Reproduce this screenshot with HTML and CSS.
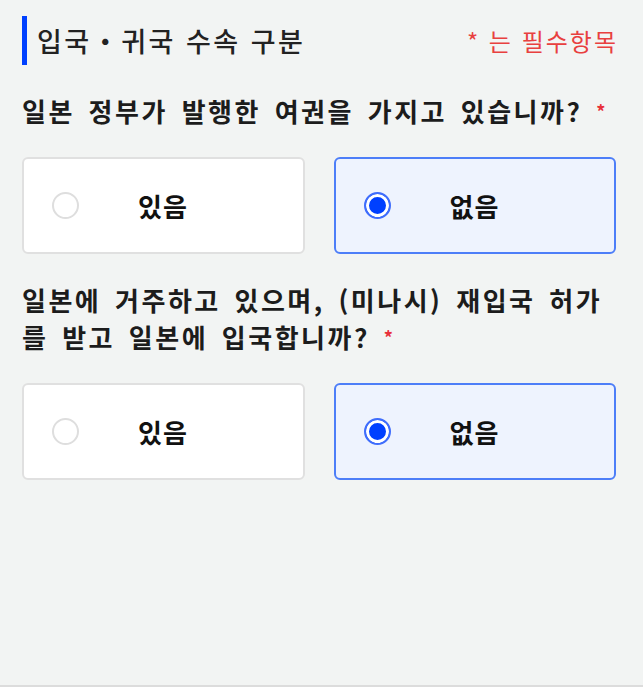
FILE: index.html
```html
<!DOCTYPE html>
<html lang="ko">
<head>
    <meta charset="UTF-8">
    <meta name="viewport" content="width=device-width, initial-scale=1.0">
    <title>입국・귀국 수속 구분</title>
    <link rel="stylesheet" href="styles.css">
</head>
<body>

    <div class="page">
        <div class="section-head">
            <h2>입국・귀국 수속 구분</h2>
            <span class="required-note">* 는 필수항목</span>
        </div>

        <!-- 여권 여부 -->
        <p class="question">일본 정부가 발행한 여권을 가지고 있습니까? <span class="req">*</span></p>
        <div class="options">
            <label class="option">
                <input type="radio" name="passport" value="yes">
                <span class="radio"></span>
                <span class="option-text">있음</span>
            </label>
            <label class="option checked">
                <input type="radio" name="passport" value="no" checked>
                <span class="radio"></span>
                <span class="option-text">없음</span>
            </label>
        </div>

        <!-- 재입국 허가 여부 -->
        <p class="question">일본에 거주하고 있으며, (미나시) 재입국 허가를 받고 일본에 입국합니까? <span class="req">*</span></p>
        <div class="options">
            <label class="option">
                <input type="radio" name="reentry" value="yes">
                <span class="radio"></span>
                <span class="option-text">있음</span>
            </label>
            <label class="option checked">
                <input type="radio" name="reentry" value="no" checked>
                <span class="radio"></span>
                <span class="option-text">없음</span>
            </label>
        </div>
    </div>

    <script>
        // keep the card highlight in sync with the radio state
        var radios = document.querySelectorAll('.option input');
        for (var i = 0; i < radios.length; i++) {
            radios[i].addEventListener('change', function () {
                var group = document.querySelectorAll('input[name="' + this.name + '"]');
                for (var j = 0; j < group.length; j++) {
                    group[j].parentNode.classList.toggle('checked', group[j].checked);
                }
            });
        }
    </script>

</body>
</html>
```

FILE: styles.css
```css
* {
    box-sizing: border-box;
}

body {
    font-family: "Noto Sans CJK KR", "Noto Sans", sans-serif;
    background-color: #f2f4f3;
    color: #1a1a1a;
    margin: 0;
    padding: 0;
}

.page {
    height: 687px;
    padding: 16px 27px 0 22px;
    border-bottom: 2px solid #dcdcdc;
}

.section-head {
    display: flex;
    align-items: center;
    justify-content: space-between;
    height: 49px;
    border-left: 5px solid #0040ff;
    padding-left: 10px;
}

.section-head h2 {
    margin: 0;
    font-size: 27px;
    font-weight: 500;
    letter-spacing: 2.5px;
    color: #222;
}

.required-note {
    color: #e8403f;
    font-size: 24px;
    letter-spacing: 2px;
    margin-right: -2px;
}

.question {
    margin: 27px 0 0;
    font-size: 26px;
    font-weight: 700;
    line-height: 37px;
    letter-spacing: 2.5px;
    word-spacing: 4px;
    color: #1c1c1c;
}

.req {
    color: #e8303a;
    font-size: 18px;
    letter-spacing: 0;
    vertical-align: 3px;
}

.options {
    display: flex;
    gap: 29px;
    margin-top: 27px;
}

.option {
    flex: 1;
    height: 97px;
    display: flex;
    align-items: center;
    padding-left: 28px;
    background-color: white;
    border: 2px solid #e0e0e0;
    border-radius: 6px;
    cursor: pointer;
}

.option input {
    display: none;
}

.radio {
    width: 27px;
    height: 27px;
    border: 2px solid #dedede;
    border-radius: 50%;
    background-color: white;
    flex-shrink: 0;
}

.option-text {
    margin-left: 59px;
    font-size: 26px;
    font-weight: 700;
    letter-spacing: 1px;
    color: #111;
}

.option.checked {
    background-color: #eef3fe;
    border-color: #4d7ef8;
}

.option.checked .radio {
    border-color: #3f6dfc;
    background-color: #0040ff;
    box-shadow: inset 0 0 0 3px white;
}
```
